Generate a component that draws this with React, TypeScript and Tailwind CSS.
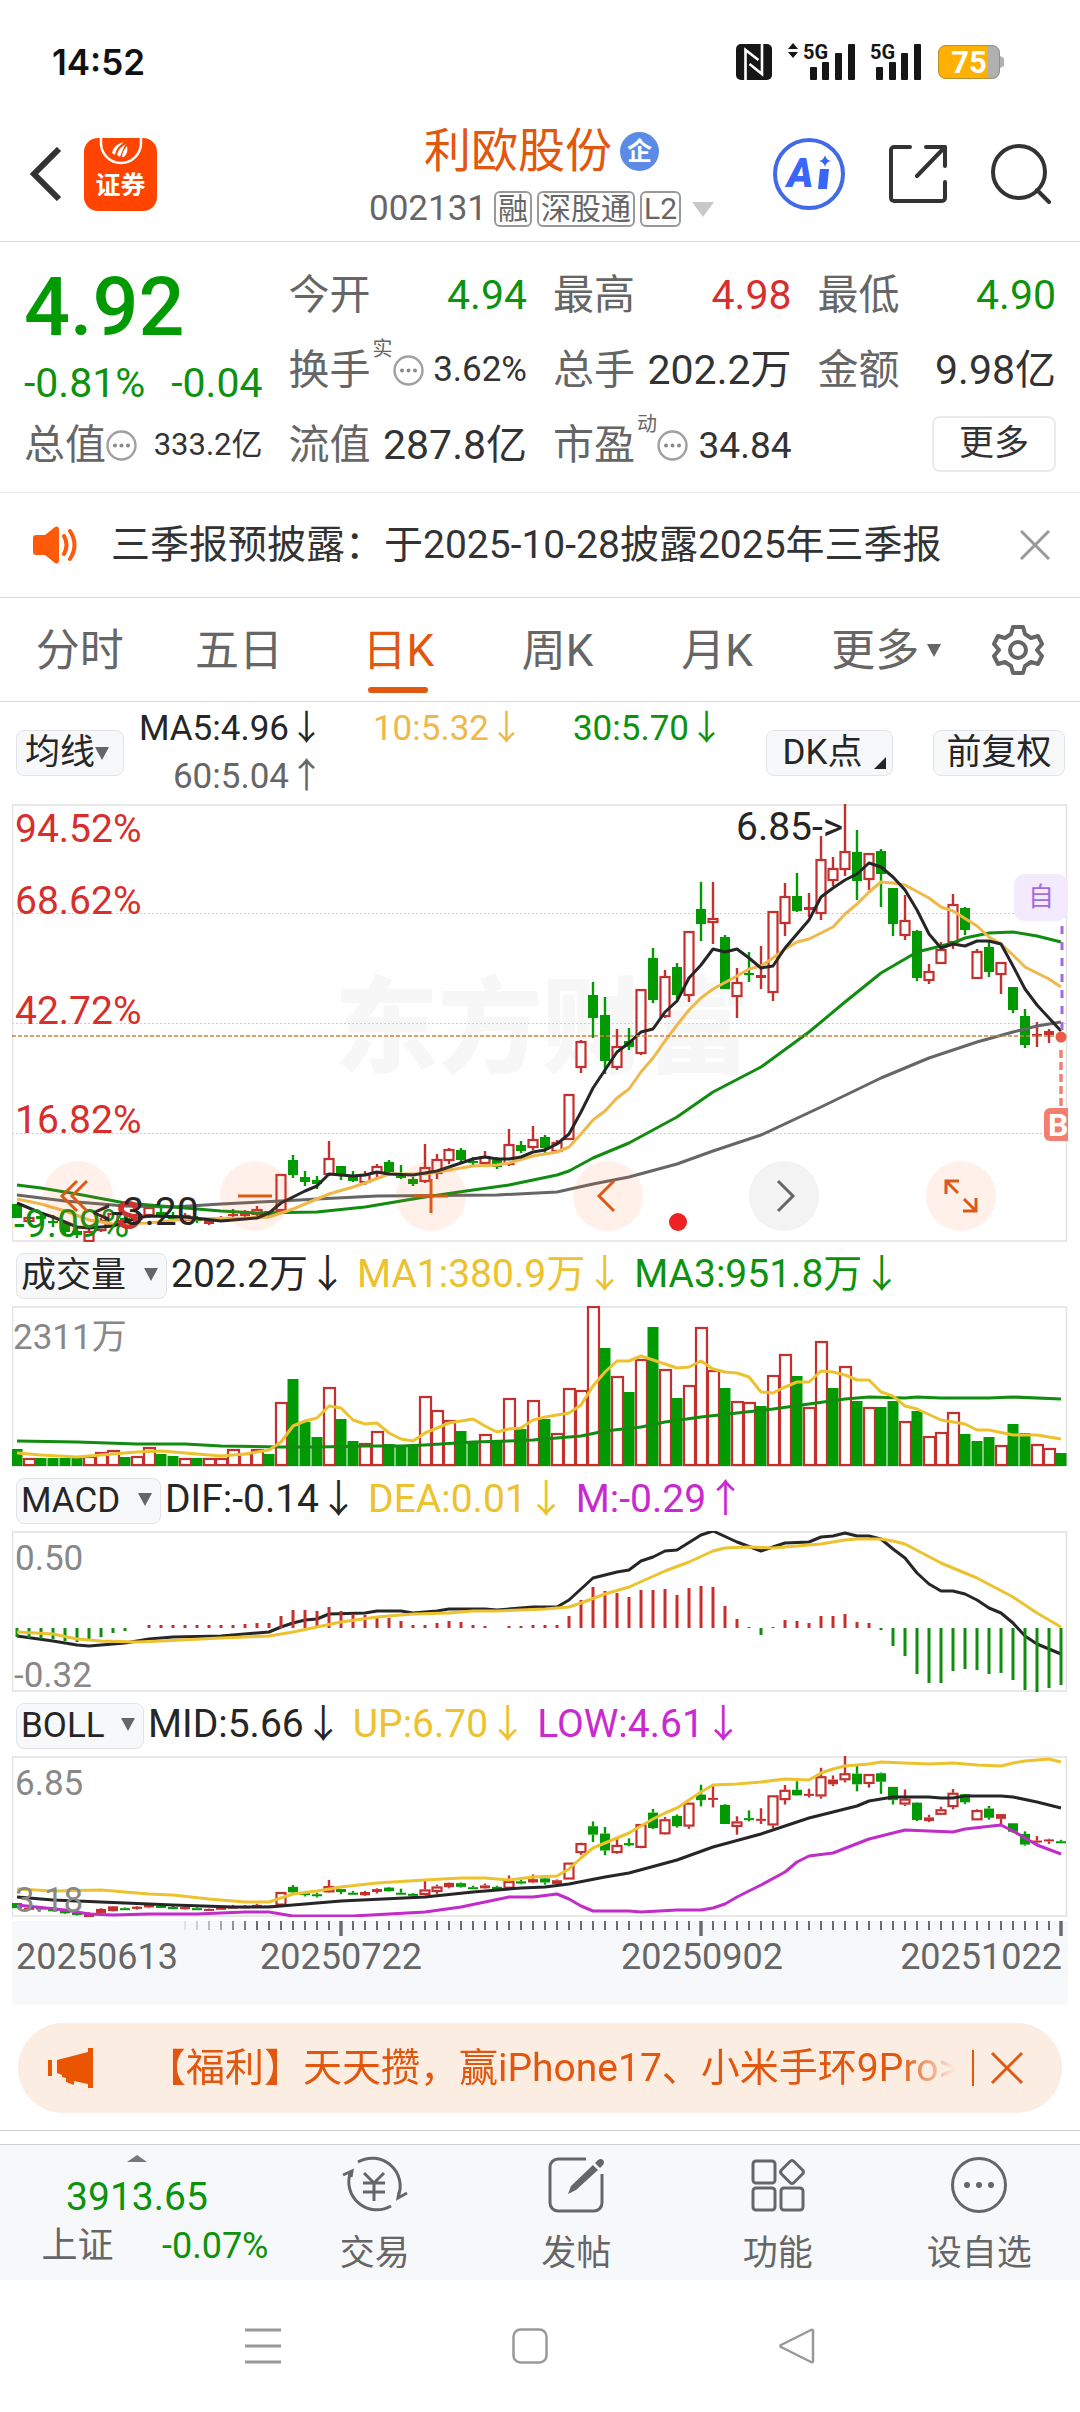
import { ReactNode } from 'react'

const RED = '#c4302e'
const GREEN = '#029a02'
const INK = '#262626'
const GRID = '#e3e3e3'

type Candle = ['u' | 'd', number, number, number, number]
type Point = [number, number]

// One entry per trading day: direction, body top, body bottom, high, low.
// Values are distances from the top of the price panel (0 = 6.85, 438 = 3.18).
const candles: Candle[] = [
  ['d', 400, 414, 400, 414], ['u', 413, 418, 410, 420], ['d', 412, 415, 410, 418], ['d', 417, 419, 411, 423],
  ['d', 419, 428, 419, 430], ['d', 427, 431, 422, 434], ['u', 427, 438, 425, 438], ['u', 416, 427, 414, 428],
  ['u', 409, 422, 408, 423], ['d', 414, 417, 412, 419], ['u', 410, 416, 408, 418], ['u', 403, 412, 402, 414],
  ['d', 408, 411, 404, 413], ['d', 411, 415, 408, 416], ['u', 411, 417, 409, 418], ['d', 414, 417, 412, 419],
  ['u', 416, 420, 415, 421], ['u', 413, 417, 412, 418], ['u', 410, 412, 405, 415], ['u', 409, 412, 406, 414],
  ['u', 405, 411, 402, 413], ['d', 407, 411, 407, 412], ['u', 370, 407, 370, 408], ['d', 356, 371, 351, 374],
  ['d', 373, 378, 367, 382], ['d', 376, 380, 372, 385], ['u', 354, 371, 337, 372], ['d', 362, 370, 362, 376],
  ['d', 372, 377, 367, 378], ['u', 370, 379, 367, 381], ['u', 362, 370, 360, 374], ['d', 358, 368, 356, 369],
  ['d', 372, 373, 361, 375], ['d', 375, 380, 373, 382], ['u', 363, 378, 340, 379], ['u', 355, 370, 350, 375],
  ['u', 345, 357, 344, 360], ['d', 346, 356, 344, 358], ['d', 357, 359, 353, 362], ['u', 352, 360, 347, 361],
  ['d', 356, 363, 353, 365], ['u', 340, 361, 325, 362], ['d', 341, 347, 337, 349], ['u', 335, 344, 322, 346],
  ['d', 333, 344, 331, 350], ['u', 338, 348, 336, 349], ['u', 290, 336, 290, 336], ['u', 237, 264, 236, 269],
  ['d', 191, 214, 178, 234], ['d', 211, 257, 193, 270], ['u', 242, 264, 225, 266], ['d', 237, 243, 224, 246],
  ['u', 185, 250, 185, 251], ['d', 154, 196, 144, 199], ['u', 172, 213, 166, 214], ['d', 163, 191, 159, 195],
  ['u', 127, 192, 127, 198], ['d', 105, 120, 78, 137], ['u', 114, 119, 78, 140], ['d', 133, 185, 131, 185],
  ['u', 178, 193, 164, 214], ['d', 169, 171, 148, 178], ['u', 171, 174, 142, 185], ['u', 107, 189, 107, 197],
  ['u', 92, 120, 79, 132], ['d', 92, 107, 69, 108], ['u', 103, 106, 89, 113], ['u', 55, 110, 32, 116],
  ['u', 64, 77, 53, 82], ['u', 47, 66, 0, 72], ['d', 48, 77, 26, 96], ['u', 49, 76, 49, 86],
  ['d', 47, 70, 45, 103], ['d', 84, 120, 84, 132], ['u', 116, 132, 91, 136], ['d', 127, 174, 126, 177],
  ['u', 167, 177, 160, 180], ['u', 145, 160, 138, 160], ['u', 100, 139, 90, 145], ['d', 104, 126, 103, 131],
  ['u', 147, 175, 145, 175], ['d', 143, 168, 136, 173], ['u', 158, 171, 158, 190], ['d', 183, 206, 183, 209],
  ['d', 212, 241, 205, 244], ['u', 230, 232, 218, 243], ['u', 227, 231, 225, 239], ['d', 232, 234, 228, 236],
]

const ma5: Point[] = [
  [0, 399], [2, 409], [3, 413], [4, 418], [5, 423], [6, 424], [7, 423], [8, 422], [10, 414], [11, 412], [14, 413],
  [17, 417], [19, 415], [20, 414], [21, 409], [22, 399], [23, 393], [24, 387], [25, 382], [26, 370], [28, 372],
  [29, 371], [30, 368], [31, 370], [33, 371], [34, 369], [35, 367], [36, 363], [37, 359], [38, 355], [39, 353],
  [40, 355], [41, 355], [42, 353], [43, 348], [44, 346], [45, 340], [46, 330], [47, 308], [48, 284], [49, 266],
  [50, 248], [51, 239], [52, 228], [53, 225], [54, 208], [55, 197], [56, 174], [57, 161], [58, 145], [59, 148],
  [60, 145], [61, 154], [62, 164], [63, 162], [64, 144], [65, 130], [66, 116], [67, 93], [68, 84], [69, 76],
  [70, 70], [71, 59], [72, 63], [73, 73], [74, 86], [75, 106], [76, 130], [77, 144], [78, 140], [79, 142],
  [80, 137], [81, 137], [82, 140], [83, 162], [84, 185], [85, 201], [86, 214], [87, 227],
]
const ma10: Point[] = [
  [0, 395], [2, 400], [4, 407], [6, 416], [8, 420], [11, 419], [14, 415], [19, 414], [21, 413], [22, 409],
  [23, 405], [24, 400], [26, 390], [28, 383], [29, 379], [31, 370], [34, 370], [36, 366], [38, 362], [40, 361],
  [41, 359], [43, 352], [44, 350], [45, 348], [46, 343], [47, 330], [48, 316], [49, 307], [50, 294], [51, 285],
  [52, 268], [53, 254], [54, 237], [55, 221], [56, 206], [57, 194], [58, 185], [60, 172], [61, 165], [62, 162],
  [63, 154], [64, 145], [65, 138], [66, 135], [67, 129], [68, 123], [69, 110], [70, 100], [71, 88], [72, 78],
  [73, 79], [74, 81], [76, 94], [77, 103], [78, 107], [80, 122], [81, 133], [82, 140], [83, 151], [84, 163],
  [86, 175], [87, 183],
]
const ma30: Point[] = [
  [0, 381], [2, 384], [5, 390], [9, 399], [11, 401], [14, 404], [17, 407], [20, 409], [25, 408], [29, 403],
  [34, 393], [38, 386], [41, 381], [43, 376], [45, 371], [46, 367], [48, 354], [51, 339], [55, 313], [58, 288],
  [62, 263], [66, 228], [69, 198], [72, 169], [75, 148], [78, 139], [79, 134], [81, 129], [83, 128], [85, 132],
  [87, 138],
]
const ma60: Point[] = [
  [0, 391], [4, 397], [9, 402], [13, 403], [17, 400], [22, 397], [25, 395], [30, 392], [40, 391], [45, 388],
  [48, 380], [51, 373], [55, 360], [58, 347], [62, 331], [67, 303], [72, 274], [76, 254], [80, 238], [83, 228],
  [85, 222], [87, 218],
]

// Volume bar heights, negative on days drawn green.
const volumes = [
  -17, 8, -8, -8, -8, -8, 10, 14, 16, -9, 10, 19, -12, -10, 8, -8, 8, 8, 17, 13, 17, -12, 64, -87, -44, -29, 79, -47,
  -25, 23, 35, -22, -20, -20, 70, 56, 46, -35, -24, 32, -26, 68, -37, 66, -47, 33, 78, 76, 160, -118, 90, -74, 107,
  -139, 97, -68, 81, 139, 96, -78, 65, 64, -60, 91, 112, -90, 59, 125, -78, 100, -65, 59, -59, -65, 45, -55, 30, 34,
  54, -32, -25, -29, 21, -42, -33, 22, 18, -13,
]
const volShort: Point[] = [
  [0, 147], [2, 149], [5, 151], [8, 148], [10, 146], [12, 145], [15, 148], [17, 150], [19, 148], [21, 144],
  [22, 136], [23, 120], [24, 115], [25, 112], [26, 100], [27, 102], [28, 114], [29, 118], [30, 117], [31, 127],
  [32, 133], [33, 135], [34, 127], [36, 117], [37, 115], [38, 113], [39, 120], [40, 126], [41, 123], [42, 122],
  [43, 114], [44, 111], [46, 107], [47, 99], [48, 80], [49, 66], [50, 55], [51, 55], [52, 50], [55, 62], [56, 61],
  [57, 55], [58, 63], [59, 66], [60, 67], [61, 71], [62, 86], [63, 87], [64, 81], [65, 76], [66, 76], [67, 65],
  [68, 66], [69, 69], [70, 74], [71, 74], [72, 86], [73, 90], [74, 100], [75, 103], [77, 114], [79, 118],
  [80, 124], [81, 124], [83, 129], [85, 129], [87, 133],
]
const volLong: Point[] = [
  [0, 135], [5, 136], [10, 138], [14, 138], [17, 140], [22, 141], [25, 141], [29, 140], [32, 140], [34, 139],
  [38, 136], [41, 135], [43, 134], [45, 132], [47, 130], [49, 125], [52, 121], [54, 116], [57, 111], [60, 107],
  [63, 103], [66, 98], [69, 93], [71, 91], [74, 92], [75, 91], [77, 92], [81, 92], [83, 91], [87, 93],
]

const macdBars = [
  -9, -10, -11, -11, -13, -14, -11, -9, -5, -3, 0, 3, 3, 3, 3, 3, 3, 3, 3, 4, 5, 5, 12, 18, 18, 17, 21, 17, 14, 13,
  10, 10, 7, 3, 3, 5, 7, 6, 3, 2, 0, 2, 2, 3, 3, 3, 12, 28, 41, 37, 35, 31, 38, 38, 39, 33, 40, 42, 41, 22, 9, 1,
  -7, 1, 8, 7, 5, 12, 12, 14, 6, 5, -2, -18, -28, -46, -55, -55, -43, -41, -42, -46, -45, -52, -62, -64, -60, -57,
]
const dif: Point[] = [
  [0, 105], [3, 110], [5, 114], [6, 115], [9, 112], [11, 108], [13, 106], [17, 105], [20, 102], [21, 101], [22, 96],
  [23, 92], [24, 89], [25, 88], [26, 83], [29, 82], [30, 80], [32, 80], [33, 82], [35, 80], [36, 78], [39, 78],
  [40, 79], [43, 76], [45, 76], [46, 69], [47, 58], [48, 47], [50, 41], [51, 39], [52, 30], [53, 26], [54, 20],
  [55, 19], [57, 4], [58, 0], [60, 11], [62, 20], [64, 12], [66, 11], [67, 6], [68, 5], [69, 2], [70, 5], [71, 5],
  [72, 8], [73, 18], [74, 27], [75, 42], [76, 53], [77, 60], [78, 60], [79, 63], [80, 69], [81, 77], [82, 82],
  [83, 92], [84, 105], [85, 113], [87, 123],
]
const dea: Point[] = [
  [0, 101], [3, 103], [5, 108], [7, 110], [10, 111], [12, 110], [17, 107], [21, 105], [23, 101], [25, 96], [27, 91],
  [30, 86], [33, 83], [36, 82], [38, 80], [40, 80], [44, 78], [46, 76], [47, 72], [49, 63], [51, 56], [54, 40],
  [56, 31], [58, 20], [59, 17], [61, 16], [63, 17], [65, 15], [67, 13], [69, 9], [70, 8], [72, 8], [73, 10],
  [74, 13], [77, 32], [80, 47], [83, 66], [85, 82], [87, 96],
]

const bollUp: Point[] = [
  [0, 133], [3, 135], [7, 134], [9, 136], [11, 138], [13, 139], [16, 143], [19, 146], [21, 146], [23, 138],
  [25, 135], [27, 131], [30, 127], [34, 124], [37, 122], [39, 122], [41, 124], [43, 121], [45, 120], [46, 113],
  [47, 102], [48, 92], [50, 82], [51, 77], [53, 63], [54, 57], [55, 52], [57, 36], [58, 29], [60, 28], [62, 26],
  [64, 23], [66, 24], [67, 17], [68, 13], [69, 10], [71, 8], [72, 6], [76, 8], [78, 7], [80, 9], [82, 10], [83, 7],
  [84, 5], [86, 3], [87, 6],
]
const bollMid: Point[] = [
  [0, 141], [3, 144], [9, 147], [13, 149], [18, 151], [21, 151], [27, 145], [34, 141], [38, 136], [42, 132],
  [44, 131], [46, 128], [49, 121], [51, 117], [55, 104], [58, 91], [62, 78], [66, 62], [70, 50], [71, 45],
  [73, 41], [76, 41], [77, 42], [78, 42], [79, 40], [82, 40], [83, 41], [85, 46], [87, 52],
]
const bollLow: Point[] = [
  [0, 149], [4, 154], [6, 158], [8, 159], [11, 158], [15, 158], [19, 156], [21, 156], [23, 160], [28, 160],
  [31, 158], [34, 156], [37, 151], [39, 146], [41, 141], [43, 141], [45, 138], [46, 143], [47, 150], [48, 155],
  [51, 155], [52, 156], [55, 154], [57, 154], [58, 152], [59, 148], [60, 141], [62, 129], [64, 116], [65, 106],
  [66, 100], [68, 97], [71, 83], [73, 77], [74, 74], [76, 75], [78, 76], [79, 73], [82, 69], [83, 75], [85, 89],
  [87, 98],
]

const dayX = (i: number) => 5 + 12 * i

function Line({ points, color }: { points: Point[]; color: string }) {
  return (
    <polyline
      points={points.map(([i, y]) => `${dayX(i)},${y}`).join(' ')}
      fill="none"
      stroke={color}
      strokeWidth={3}
      strokeLinejoin="round"
    />
  )
}

function Candles({ scale = 1 }: { scale?: number }) {
  return (
    <>
      {candles.map(([dir, top, bottom, high, low], i) => {
        const x = dayX(i)
        const up = dir === 'u'
        const color = up ? RED : GREEN
        const y = top * scale
        const h = Math.max((bottom - top) * scale, 2)
        const solid = !up || h < 5

        return (
          <g key={i}>
            <line x1={x} x2={x} y1={high * scale} y2={y} stroke={color} strokeWidth={2.4} />
            <line x1={x} x2={x} y1={y + h} y2={Math.max(low * scale, y + h)} stroke={color} strokeWidth={2.4} />
            {solid ? (
              <rect x={x - 5} y={y} width={10} height={h} fill={color} />
            ) : (
              <rect x={x - 4.5} y={y + 1} width={9} height={h - 2} fill="#fff" fillOpacity={0.6} stroke={color} strokeWidth={2.2} />
            )}
          </g>
        )
      })}
    </>
  )
}

function Panel({ height, label, children }: { height: number; label: string; children: ReactNode }) {
  return (
    <svg viewBox={`0 0 1056 ${height}`} className="block w-full h-auto" role="img" aria-label={label}>
      <rect x={0.5} y={1} width={1054} height={height - 2} fill="none" stroke={GRID} strokeWidth={1.6} />
      {children}
    </svg>
  )
}

function PricePanel() {
  const levels: [string, number, number][] = [
    ['68.62%', 110, 109.5],
    ['42.72%', 220, 219.5],
    ['16.82%', 329, 329.5],
  ]
  return (
    <Panel height={438} label="日K线">
      <text x={322} y={261} fontSize={104} fontWeight={900} fill="#f7f7f7">东方财富</text>
      {levels.map(([, , y]) => (
        <line key={y} x1={0} x2={1056} y1={y} y2={y} stroke="#cfcfcf" strokeDasharray="2 2" />
      ))}
      <Candles />
      <Line points={ma60} color="#666" />
      <Line points={ma30} color="#118c11" />
      <Line points={ma10} color="#f0b84a" />
      <Line points={ma5} color={INK} />
      <line x1={0} x2={1056} y1={232} y2={232} stroke="#cd8242" strokeWidth={1.6} strokeDasharray="4 2" />

      <g fontSize={39} fill="#d62f2d">
        <text x={3} y={38}>94.52%</text>
        {levels.map(([text, y]) => (
          <text key={text} x={3} y={y}>{text}</text>
        ))}
        <text x={2} y={433} fill="#0c920c">-9.09%</text>
        <text x={104} y={425} fontWeight={700}>S</text>
      </g>
      <g fontSize={39} fill={INK}>
        <text x={80} y={421}>&lt;-3.20</text>
        <text x={724} y={36}>6.85-&gt;</text>
      </g>

      <rect x={1002} y={70} width={54} height={47} rx={10} fill="#f3ebfd" />
      <text x={1029} y={102} fontSize={26} textAnchor="middle" fill="#a56bdc">自</text>
      <line x1={1050} x2={1050} y1={122} y2={226} stroke="#a56bdc" strokeWidth={3} strokeDasharray="8 8" />
      <line x1={1049} x2={1049} y1={246} y2={302} stroke="#f27f70" strokeWidth={3.4} strokeDasharray="8 4" />
      <circle cx={1049} cy={233} r={5.5} fill="#ee5a48" />
      <path d="M1056 304h-18a6 6 0 0 0-6 6v21a6 6 0 0 0 6 6h18z" fill="#f27f70" />
      <text x={1036} y={332} fontSize={32} fontWeight={700} fill="#fff">B</text>
      <circle cx={666} cy={418} r={9} fill="#ee2222" />
    </Panel>
  )
}

function VolumePanel() {
  return (
    <Panel height={161} label="成交量">
      {volumes.map((v, i) =>
        v < 0 ? (
          <rect key={i} x={dayX(i) - 5.5} y={160 + v} width={11} height={-v} fill={GREEN} />
        ) : (
          <rect key={i} x={dayX(i) - 5} y={161 - v} width={11} height={v - 2} fill="#fff" stroke={RED} strokeWidth={2.2} />
        )
      )}
      <Line points={volLong} color="#118c11" />
      <Line points={volShort} color="#ecc22e" />
      <text x={1} y={43} fontSize={35} fill="#888">2311万</text>
    </Panel>
  )
}

function MacdPanel() {
  return (
    <Panel height={161} label="MACD">
      <Line points={dif} color={INK} />
      {macdBars.map((v, i) => (
        <line key={i} x1={dayX(i)} x2={dayX(i)} y1={97} y2={97 - v} stroke={v < 0 ? '#118c11' : RED} strokeWidth={3} />
      ))}
      <Line points={dea} color="#ecc22e" />
      <text x={3} y={39} fontSize={35} fill="#888">0.50</text>
      <text x={2} y={156} fontSize={35} fill="#888">-0.32</text>
    </Panel>
  )
}

function BollPanel() {
  return (
    <Panel height={161} label="BOLL">
      <Candles scale={161 / 438} />
      <Line points={bollMid} color={INK} />
      <Line points={bollUp} color="#ecc22e" />
      <Line points={bollLow} color="#c22cc8" />
      <text x={3} y={39} fontSize={35} fill="#888">6.85</text>
      <text x={3} y={156} fontSize={35} fill="#888">3.18</text>
    </Panel>
  )
}

function TimeAxis() {
  const days = Array.from({ length: 74 }, (_, n) => n + 14)
  const major = [27, 57, 87]
  return (
    <div className="mt-1 h-[84px] bg-[#f7f8fa]">
      <svg viewBox="0 0 1056 16" className="block w-full h-auto" aria-hidden="true">
        {days.map(i => (
          <line
            key={i}
            x1={dayX(i)}
            x2={dayX(i)}
            y1={0}
            y2={major.includes(i) ? 15 : 9}
            stroke="#6b6b6b"
            strokeWidth={major.includes(i) ? 3.5 : 2}
            opacity={Math.min(1, (i - 13) / 7)}
          />
        ))}
      </svg>
      <div className="grid grid-cols-[244fr_361fr_279fr_auto] pl-1 pr-1.5 text-[36px] leading-10 text-[#666]">
        <span>20250613</span>
        <span>20250722</span>
        <span>20250902</span>
        <span>20251022</span>
      </div>
    </div>
  )
}

function Caret({ className = '' }: { className?: string }) {
  return (
    <svg viewBox="0 0 14 13" className={`w-3.5 h-[13px] ${className}`} fill="#666" aria-hidden="true">
      <path d="M0 0h14l-7 13z" />
    </svg>
  )
}

function IndicatorSelect({ label, options, width }: { label: string; options: string[]; width: string }) {
  return (
    <div className={`relative shrink-0 h-[46px] ${width}`}>
      <select
        aria-label={label}
        className="appearance-none w-full h-full pl-1 pt-px rounded-lg border border-[#e2e4e8] bg-[#f7f8fa] text-[35px] leading-[42px] text-[#262626]"
      >
        {options.map(option => (
          <option key={option}>{option}</option>
        ))}
      </select>
      <Caret className="absolute right-[9px] top-[17px] pointer-events-none" />
    </div>
  )
}

function Reading({ text, up = false, color }: { text: string; up?: boolean; color: string }) {
  return (
    <span className={`whitespace-nowrap ${color}`}>
      {text}
      {up ? '↑' : '↓'}
    </span>
  )
}

function IndicatorBar({ children }: { children: ReactNode }) {
  return <div className="flex items-center h-16 pl-1 gap-1 text-[39px] leading-[46px]">{children}</div>
}

function StatusBar() {
  return (
    <div className="flex items-center justify-between h-[105px] pt-[19px] pl-[52px] pr-[76px]">
      <span className="font-[Inter] font-semibold text-[35px] leading-10 text-[#111]">14:52</span>
      <div className="flex items-center">
        <svg viewBox="0 0 36 36" className="w-9 h-9" aria-label="NFC">
          <rect width="36" height="36" rx="5" fill="#161616" />
          <path d="M9.500 36V6l13 10M26 0v30L13.500 20" fill="none" stroke="#fff" strokeWidth="2.600" />
        </svg>
        <svg viewBox="0 0 68 38" className="w-[68px] h-[38px] ml-4 overflow-visible" fill="#161616" aria-label="5G">
          <path d="M0 6l5-6 5 6zM0 9h10l-5 6z" />
          <text x="15" y="16" fontSize="20" fontWeight="700">5G</text>
          <rect x="22" y="24" width="7" height="13" rx="1" />
          <rect x="34" y="19" width="7" height="18" rx="1" />
          <rect x="47" y="10" width="7" height="27" rx="1" />
          <rect x="60" y="1" width="7" height="36" rx="1" />
        </svg>
        <svg viewBox="0 0 52 38" className="w-[52px] h-[38px] ml-3.5 overflow-visible" fill="#161616" aria-label="5G">
          <text x="0" y="16" fontSize="20" fontWeight="700">5G</text>
          <rect x="6" y="24" width="7" height="13" rx="1" />
          <rect x="19" y="19" width="7" height="18" rx="1" />
          <rect x="31" y="10" width="7" height="27" rx="1" />
          <rect x="44" y="1" width="7" height="36" rx="1" />
        </svg>
        <svg viewBox="0 0 66 34" className="w-[66px] h-[34px] ml-4 overflow-visible" aria-label="电量75%">
          <path d="M50 0h4a8 8 0 0 1 8 8v3l4 2v8l-4 2v3a8 8 0 0 1-8 8h-4z" fill="#b0b0b0" />
          <path d="M8 0h42v34H8a8 8 0 0 1-8-8V8a8 8 0 0 1 8-8z" fill="#ffb000" />
          <path d="M8 .5h46a7.500 7.500 0 0 1 7.500 7.500v18a7.500 7.500 0 0 1-7.500 7.500H8A7.500 7.500 0 0 1 .5 26V8A7.500 7.500 0 0 1 8 .5z" fill="none" stroke="#8a7a4a" strokeOpacity=".6" />
          <text x="31" y="28" fontSize="31" fontWeight="700" textAnchor="middle" fill="#fff">75</text>
        </svg>
      </div>
    </div>
  )
}

function Header() {
  return (
    <header className="flex items-center justify-between h-[137px] pt-0.5 pl-[30px] pr-[29px] border-b border-[#d8d8d8]">
      <div className="flex items-center gap-[22px] w-[280px]">
        <button aria-label="返回">
          <svg viewBox="0 0 32 54" className="w-8 h-[54px]" fill="none" stroke="#333" strokeWidth="6">
            <path d="M29 2L4 27l25 25" />
          </svg>
        </button>
        <div className="flex flex-col items-center w-[73px] h-[73px] rounded-[14px] bg-[#ff4400]">
          <svg viewBox="0 0 44 28" className="w-11 h-7" aria-hidden="true">
            <path d="M2 0v5a20 20 0 0 0 40 0V0" fill="none" stroke="#fff" strokeWidth="2.500" />
            <path d="M13 15c1-6 5-9 12-11-5 4-8 7-9 13zM18 17c1-5 4-8 9-11-3 4-4 8-6 13zM23 19c0-4 2-8 5-11 1 5 0 8-3 11z" fill="#fff" />
          </svg>
          <span className="mt-1 text-[25px] leading-8 font-bold text-white">证券</span>
        </div>
      </div>

      <div className="flex flex-col items-center pt-2.5">
        <div className="flex items-center gap-2 h-[60px]">
          <h1 className="text-[47px] leading-[60px] text-[#e2570e]">利欧股份</h1>
          <span className="flex items-center justify-center w-[39px] h-[39px] rounded-full bg-[#5b8be6] text-[25px] leading-none font-bold text-white">企</span>
        </div>
        <div className="flex items-center gap-[5px] h-[56px] text-[#666]">
          <span className="pr-0.5 text-[35px]">002131</span>
          <Tag>融</Tag>
          <Tag>深股通</Tag>
          <Tag>L2</Tag>
          <svg viewBox="0 0 22 15" className="w-[22px] h-[15px] ml-1.5" fill="#c8c8c8" aria-hidden="true">
            <path d="M0 0h22L11 15z" />
          </svg>
        </div>
      </div>

      <div className="flex items-center gap-11">
        <button aria-label="Ai">
          <svg viewBox="0 0 72 72" className="w-[72px] h-[72px]">
            <circle cx="36" cy="36" r="34" fill="none" stroke="#4169e8" strokeWidth="4" />
            <text x="14" y="49" fontSize="40" fontWeight="900" fontStyle="italic" fill="#3a66f8">A</text>
            <path d="M47 31h9l-2 20h-9zM52 17q1 5 6 6-5 1-6 6-1-5-6-6 5-1 6-6z" fill="#3a66f8" />
          </svg>
        </button>
        <button aria-label="分享">
          <svg viewBox="0 0 58 58" className="w-[58px] h-[58px]" fill="none" stroke="#333" strokeWidth="4" strokeLinecap="round" strokeLinejoin="round">
            <path d="M21 2H5a3 3 0 0 0-3 3v48a3 3 0 0 0 3 3h48a3 3 0 0 0 3-3V37M37 2h19v19M56 2L28 31" />
          </svg>
        </button>
        <button aria-label="搜索">
          <svg viewBox="0 0 60 60" className="w-[60px] h-[60px]" fill="none" stroke="#333" strokeWidth="4" strokeLinecap="round">
            <circle cx="28" cy="28" r="26" />
            <path d="M46 46l12 12" />
          </svg>
        </button>
      </div>
    </header>
  )
}

function Tag({ children }: { children: ReactNode }) {
  return <span className="px-[2px] h-9 rounded-md border-2 border-[#999] text-[30px] leading-8">{children}</span>
}

function Info({ note }: { note?: string }) {
  return (
    <button className="relative shrink-0 w-[31px] h-[31px]" aria-label="说明">
      {note && <span className="absolute right-full -top-4 text-xl leading-5 text-[#666]">{note}</span>}
      <svg viewBox="0 0 31 31" className="block">
        <circle cx="15.500" cy="15.500" r="14" fill="none" stroke="#a0a0a0" strokeWidth="2.400" />
        <g fill="#8a8a8a">
          <circle cx="9" cy="15.500" r="2" />
          <circle cx="15.500" cy="15.500" r="2" />
          <circle cx="22" cy="15.500" r="2" />
        </g>
      </svg>
    </button>
  )
}

function Stat({ name, value, color = 'text-[#333]', size = 'text-[41px]', info }: {
  name: string
  value: string
  color?: string
  size?: string
  info?: ReactNode
}) {
  return (
    <div className="flex items-center justify-between h-[75px] whitespace-nowrap">
      <span className="flex items-center text-[41px] text-[#666]">
        {name}
        {info}
      </span>
      <span className={`${size} ${color}`}>{value}</span>
    </div>
  )
}

function Quote() {
  const green = 'text-[#0d920d]'
  return (
    <section className="grid grid-cols-4 gap-x-[26px] pl-6 pr-6 pt-4 pb-[9px] border-b border-[#ebebeb]">
      <div>
        <div className="h-[100px] text-[81px] leading-[100px] font-medium text-[#029a02]">4.92</div>
        <div className={`flex justify-between h-[50px] text-[41px] leading-[50px] ${green}`}>
          <span>-0.81%</span>
          <span>-0.04</span>
        </div>
        <Stat name="总值" value="333.2亿" size="text-[31px]" info={<Info />} />
      </div>
      <div>
        <Stat name="今开" value="4.94" color={green} />
        <Stat name="换手" value="3.62%" size="text-[35px]" info={<span className="flex pl-[22px]"><Info note="实" /></span>} />
        <Stat name="流值" value="287.8亿" />
      </div>
      <div>
        <Stat name="最高" value="4.98" color="text-[#d62f2d]" />
        <Stat name="总手" value="202.2万" />
        <Stat name="市盈" value="34.84" size="text-[37px]" info={<span className="flex pl-[22px]"><Info note="动" /></span>} />
      </div>
      <div>
        <Stat name="最低" value="4.90" color={green} />
        <Stat name="金额" value="9.98亿" />
        <div className="flex items-center justify-end h-[72px]">
          <button className="w-[124px] h-14 rounded-lg border-2 border-[#ebebeb] text-[35px] text-[#333]">更多</button>
        </div>
      </div>
    </section>
  )
}

function Notice() {
  return (
    <div className="flex items-center h-[105px] pl-[33px] pr-[30px] border-b border-[#d8d8d8]">
      <svg viewBox="0 0 46 38" className="w-[46px] h-[38px] shrink-0" aria-hidden="true">
        <path d="M3 9h9L22 1q4-2 4 3v30q0 5-4 3L12 29H3q-3 0-3-3V12q0-3 3-3z" fill="#ff5a0a" />
        <path d="M31 10q5 9 0 18M37 5q9 14 0 28" fill="none" stroke="#ff5a0a" strokeWidth="4" strokeLinecap="round" />
      </svg>
      <p className="ml-8 flex-1 text-[39px] whitespace-nowrap text-[#333]">三季报预披露：于2025-10-28披露2025年三季报</p>
      <button aria-label="关闭">
        <svg viewBox="0 0 30 30" className="w-[30px] h-[30px]" stroke="#999" strokeWidth="3">
          <path d="M1 1l28 28M29 1L1 29" />
        </svg>
      </button>
    </div>
  )
}

function PeriodTabs() {
  const tabs = ['分时', '五日', '日K', '周K', '月K']
  return (
    <nav className="flex items-center gap-9 h-[104px] pr-9 border-b border-[#d8d8d8] text-[44px] text-[#666]">
      <div className="grid grid-cols-6 flex-1 h-full">
        {tabs.map(tab => (
          <button key={tab} className={`relative h-full pt-0.5 ${tab === '日K' ? 'text-[#e2570e]' : ''}`}>
            {tab}
            {tab === '日K' && <span className="absolute bottom-2 left-1/2 -ml-[30px] w-[60px] h-1.5 rounded-full bg-[#e2570e]" />}
          </button>
        ))}
        <button className="flex items-center justify-center gap-2 pl-5 pt-0.5 whitespace-nowrap">
          更多
          <Caret />
        </button>
      </div>
      <button aria-label="设置">
        <svg viewBox="0 0 52 52" className="w-[52px] h-[52px]" fill="none" stroke="#666" strokeWidth="4" strokeLinejoin="round">
          <path d="M21 3h10l2 7 6 4 7-2 4 8-5 6 5 6-4 8-7-2-6 4-2 7H21l-2-7-6-4-7 2-4-8 5-6-5-6 4-8 7 2 6-4z" />
          <circle cx="26" cy="26" r="8" />
        </svg>
      </button>
    </nav>
  )
}

function MaBar() {
  return (
    <div className="flex items-center h-[102px] pl-1 pr-[3px]">
      <button className="flex items-center shrink-0 w-[108px] h-[46px] pl-2 rounded-lg border border-[#e2e4e8] bg-[#f7f8fa] text-[35px] leading-[44px] text-[#262626]">
        均线
        <Caret />
      </button>
      <div className="grid grid-cols-[200px_200px_200px] leading-[48px] text-right text-[35px]">
        <Reading text="MA5:4.96" color="text-[#262626]" />
        <Reading text="10:5.32" color="text-[#f0b84a]" />
        <Reading text="30:5.70" color="text-[#0d920d]" />
        <Reading text="60:5.04" up color="text-[#666]" />
      </div>
      <div className="flex flex-1 justify-end gap-10">
        <button className="relative w-[127px] h-[46px] pr-3.5 rounded-lg border border-[#e2e4e8] bg-[#f7f8fa] text-[35px] leading-[44px] text-[#262626]">
          DK点
          <svg viewBox="0 0 12 12" className="absolute right-1.5 bottom-1.5 w-3 h-3" fill="#262626" aria-hidden="true">
            <path d="M12 0v12H0z" />
          </svg>
        </button>
        <button className="w-[132px] h-[46px] rounded-lg border border-[#e2e4e8] bg-[#f7f8fa] text-[35px] leading-[44px] text-[#262626]">前复权</button>
      </div>
    </div>
  )
}

function ChartButton({ label, muted = false, path }: { label: string; muted?: boolean; path: string }) {
  return (
    <button aria-label={label} className={`w-[70px] h-[70px] rounded-full ${muted ? 'bg-[#8888881a]' : 'bg-[#ff6a2a1a]'}`}>
      <svg viewBox="0 0 70 70" fill="none" stroke={muted ? '#666' : '#dd5a14'} strokeWidth="3">
        <path d={path} />
      </svg>
    </button>
  )
}

function Chart() {
  return (
    <main className="px-3">
      <MaBar />
      <div className="relative">
        <PricePanel />
        <div className="absolute inset-x-0 bottom-[11px] flex justify-between pl-[31px] pr-[72px]">
          <ChartButton label="最早" path="M34 20L19 35l15 15M44 20L29 35l15 15" />
          <ChartButton label="缩小" path="M18 35h34" />
          <ChartButton label="放大" path="M18 35h34M35 18v34" />
          <ChartButton label="前移" path="M41 20L26 35l15 15" />
          <ChartButton label="后移" muted path="M29 20l15 15-15 15" />
          <ChartButton label="全屏" path="M20 33V20h13M20 20l12 12M50 37v13H37M50 50L38 38" />
        </div>
      </div>

      <IndicatorBar>
        <IndicatorSelect label="指标一" options={['成交量', '成交额']} width="w-[151px]" />
        <div className="flex gap-2.5">
          <Reading text="202.2万" color="text-[#262626]" />
          <Reading text="MA1:380.9万" color="text-[#ecc22e]" />
          <Reading text="MA3:951.8万" color="text-[#0d920d]" />
        </div>
      </IndicatorBar>
      <VolumePanel />

      <IndicatorBar>
        <IndicatorSelect label="指标二" options={['MACD', 'KDJ']} width="w-[145px]" />
        <div className="flex gap-2.5">
          <Reading text="DIF:-0.14" color="text-[#262626]" />
          <Reading text="DEA:0.01" color="text-[#ecc22e]" />
          <Reading text="M:-0.29" up color="text-[#c92ad0]" />
        </div>
      </IndicatorBar>
      <MacdPanel />

      <IndicatorBar>
        <IndicatorSelect label="指标三" options={['BOLL', 'RSI']} width="w-[128px]" />
        <div className="flex gap-2.5">
          <Reading text="MID:5.66" color="text-[#262626]" />
          <Reading text="UP:6.70" color="text-[#ecc22e]" />
          <Reading text="LOW:4.61" color="text-[#c92ad0]" />
        </div>
      </IndicatorBar>
      <BollPanel />
      <TimeAxis />
    </main>
  )
}

function Promo() {
  return (
    <div className="mt-[18px] mb-[17px] mx-[18px] flex items-center h-[90px] pl-[30px] pr-[38px] rounded-full bg-[#fcede3] text-[#e2570e]">
      <svg viewBox="0 0 45 40" className="w-[45px] h-10 shrink-0" fill="#eb5500" aria-hidden="true">
        <path d="M0 12h4v16H0zM9 12L40 4V0h5v40h-5v-4l-14-3v4l-8-3v-4l-4-1v-2l-5-2z" />
      </svg>
      <a
        href="#promo"
        className="flex-1 ml-[54px] overflow-hidden text-[39px] whitespace-nowrap [mask-image:linear-gradient(to_right,#000_93%,transparent)]"
      >
        【福利】天天攒，赢iPhone17、小米手环9Pro&gt;
      </a>
      <span className="w-0.5 h-9 ml-4 bg-[#e2570e]" />
      <button aria-label="关闭" className="ml-4">
        <svg viewBox="0 0 34 34" className="w-[34px] h-[34px]" stroke="#dd5a14" strokeWidth="3">
          <path d="M2 2l30 30M32 2L2 32" />
        </svg>
      </button>
    </div>
  )
}

function NavItem({ label, children }: { label: string; children: ReactNode }) {
  return (
    <button className="flex-1 flex flex-col items-center pt-2.5 text-[35px] leading-[50px] text-[#666]">
      <svg viewBox="0 0 60 60" className="w-[60px] h-[60px] mb-3.5 overflow-visible" fill="none" stroke="#666" strokeWidth="3" aria-hidden="true">
        {children}
      </svg>
      {label}
    </button>
  )
}

function BottomNav() {
  return (
    <nav className="flex h-[136px] border-t border-[#d0d0d0] bg-[#f7f8fa]">
      <button className="flex flex-col items-center w-[274px] pt-2.5 text-[#0d920d]">
        <svg viewBox="0 0 20 7" className="w-5 h-[7px]" fill="#777" aria-hidden="true">
          <path d="M0 7h20L10 0z" />
        </svg>
        <span className="mt-2.5 text-[39px] leading-[50px]">3913.65</span>
        <span className="flex justify-between w-[227px] ml-9 text-[36px] leading-[48px]">
          <span className="text-[#666]">上证</span>
          <span>-0.07%</span>
        </span>
      </button>
      <NavItem label="交易">
        <path d="M13 7a28 28 0 0 1 40 35M46 51A28 28 0 0 1 6 16M-2 20l9-4-1 6M62 38l-9 5 1-6M19 18l10 10 10-10M18 28h22M18 37h22M29 28v18" />
      </NavItem>
      <NavItem label="发帖">
        <path d="M40 4H12a8 8 0 0 0-8 8v36a8 8 0 0 0 8 8h36a8 8 0 0 0 8-8V19" />
        <path d="M47 10l5 5-22 20-8 4 3-8zM49 8l3-3q3-2 5 0t0 5l-3 3z" fill="#666" stroke="none" />
      </NavItem>
      <NavItem label="功能">
        <rect x="5" y="6" width="22" height="22" rx="3" />
        <rect x="5" y="33" width="22" height="22" rx="3" />
        <rect x="33" y="33" width="22" height="22" rx="3" />
        <path d="M42 6.500q2-2 4 0l8.500 8.500q2 2 0 4L46 27.500q-2 2-4 0L33.500 19q-2-2 0-4z" />
      </NavItem>
      <NavItem label="设自选">
        <circle cx="30" cy="30" r="26.500" />
        <g fill="#666" stroke="none">
          <circle cx="18" cy="30" r="3" />
          <circle cx="30" cy="30" r="3" />
          <circle cx="42" cy="30" r="3" />
        </g>
      </NavItem>
    </nav>
  )
}

function SystemNav() {
  return (
    <div className="flex items-center justify-between h-[131px] pl-[245px] pr-[265px]">
      <button aria-label="最近任务">
        <svg viewBox="0 0 36 36" className="w-9 h-9" stroke="#999" strokeWidth="3">
          <path d="M0 2h36M0 18h36M0 34h36" />
        </svg>
      </button>
      <button aria-label="主页">
        <svg viewBox="0 0 36 36" className="w-9 h-9" fill="none" stroke="#999" strokeWidth="2.500">
          <rect x="1.500" y="1.500" width="33" height="33" rx="7" />
        </svg>
      </button>
      <button aria-label="返回上一页">
        <svg viewBox="0 0 36 36" className="w-9 h-9" fill="none" stroke="#999" strokeWidth="2.500" strokeLinejoin="round">
          <path d="M34 3v30q0 2-2 1L2 19q-1-1 0-2L32 2q2-1 2 1z" />
        </svg>
      </button>
    </div>
  )
}

export default function App() {
  return (
    <div className="w-full min-h-screen overflow-hidden bg-white font-[Roboto,'Noto_Sans_CJK_SC',sans-serif]">
      <StatusBar />
      <Header />
      <Quote />
      <Notice />
      <PeriodTabs />
      <Chart />
      <Promo />
      <div className="h-3.5 border-t border-[#d0d0d0]" />
      <BottomNav />
      <SystemNav />
    </div>
  )
}
